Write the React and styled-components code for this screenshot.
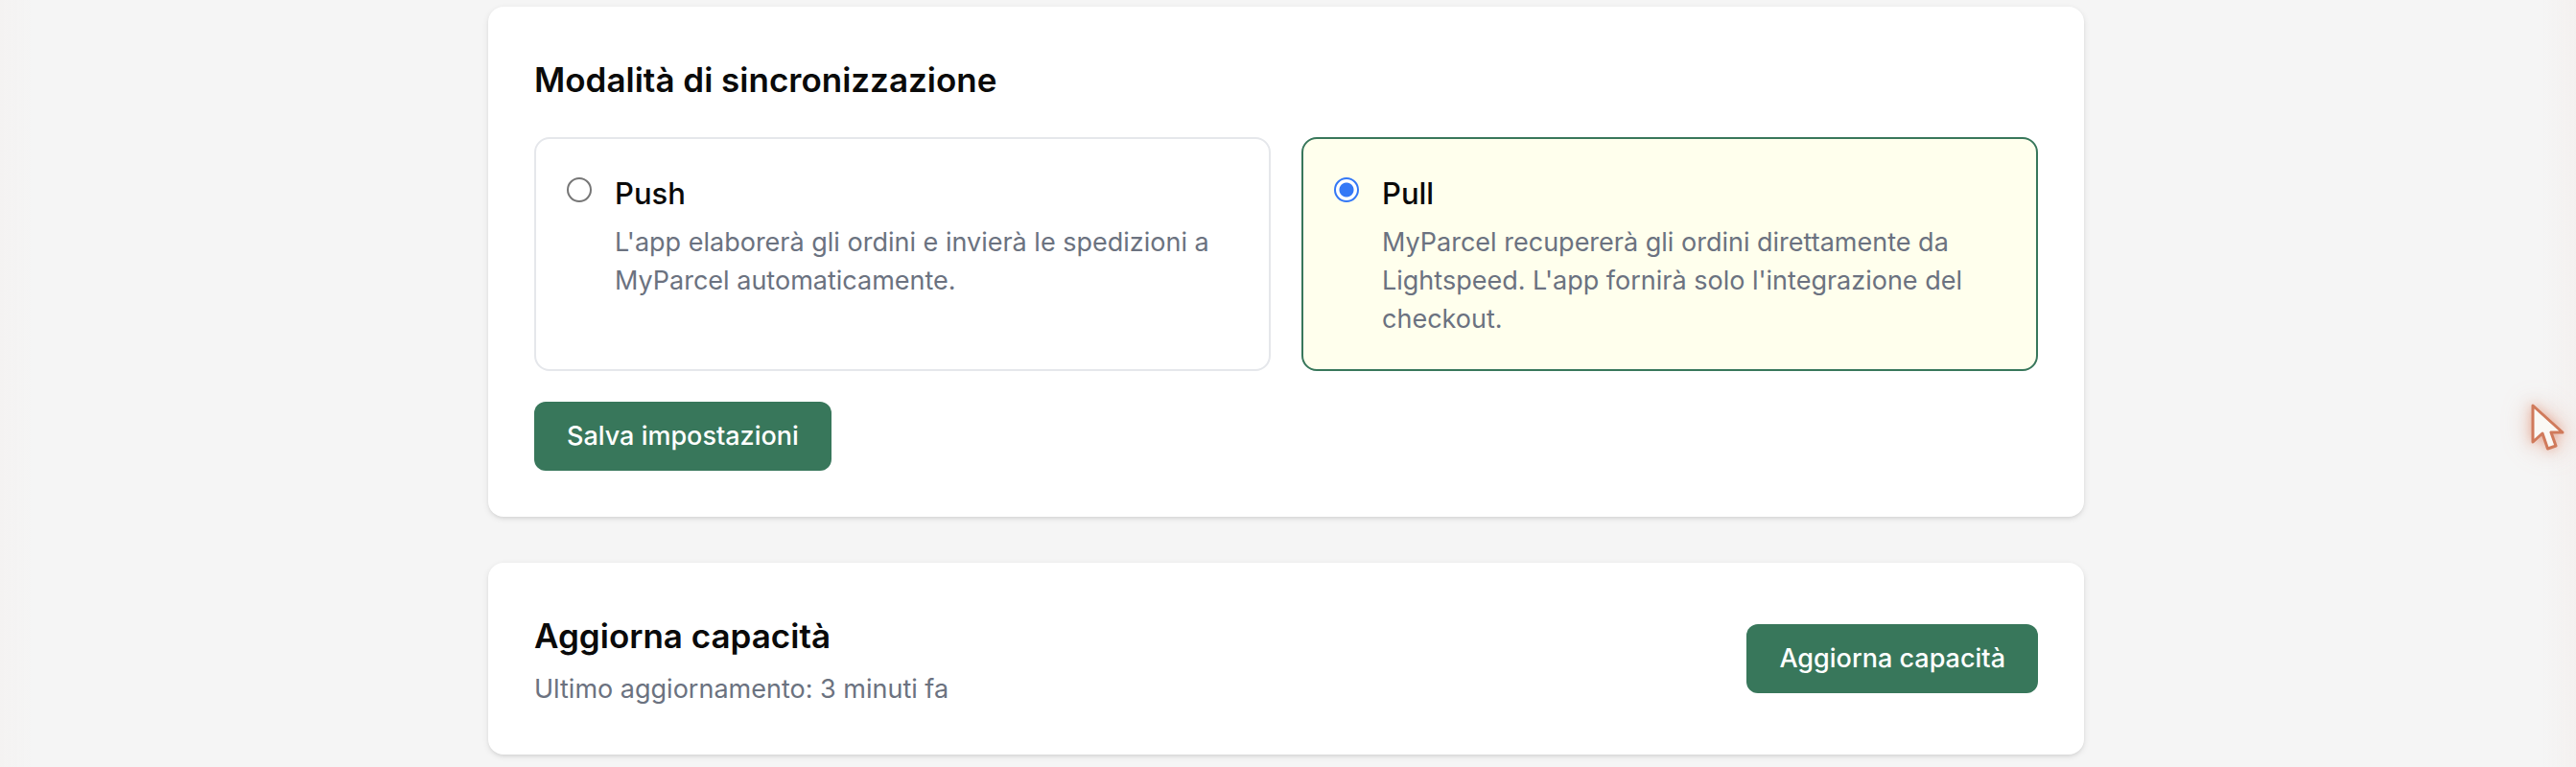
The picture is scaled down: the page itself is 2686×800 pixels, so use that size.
import React, { useState } from "react";
import styled, { createGlobalStyle } from "styled-components";

const GlobalStyle = createGlobalStyle`
  *, *::before, *::after { box-sizing: border-box; }
  body {
    margin: 0;
    background: #f5f5f5;
    color: #0a0a0a;
    font-family: Inter, "Liberation Sans", sans-serif;
  }
  h2, p { margin: 0; }
`;

const Page = styled.main`
  display: flex;
  flex-direction: column;
  align-items: center;
  gap: 48px;
  min-height: 100vh;
  padding: 7px 4px 13px 0;
`;

const Card = styled.section`
  width: 100%;
  max-width: 1664px;
  padding: 48px;
  border-radius: 16px;
  background: #fff;
  box-shadow: 0 2px 6px rgba(0, 0, 0, 0.1), 0 2px 4px -2px rgba(0, 0, 0, 0.1);
`;

const SplitCard = styled(Card)`
  display: flex;
  align-items: center;
  justify-content: space-between;
  gap: 32px;
`;

const Heading = styled.h2`
  font-size: 35px;
  line-height: 56px;
  font-weight: 600;
`;

const Options = styled.div`
  display: grid;
  grid-template-columns: repeat(2, minmax(0, 1fr));
  gap: 32px;
  margin: 32px 0;
`;

const Option = styled.label`
  display: flex;
  align-items: flex-start;
  gap: 24px;
  padding: 32px;
  border: 2px solid ${(p) => (p.$selected ? "#38775b" : "#e5e7eb")};
  border-radius: 16px;
  background: ${(p) => (p.$selected ? "#ffffed" : "#fff")};
  cursor: pointer;
`;

const Radio = styled.input`
  appearance: none;
  flex: none;
  width: 26px;
  height: 26px;
  margin: 8px 0 0;
  border: 2px solid #767676;
  border-radius: 50%;
  background: #fff;

  &:checked {
    border-color: #3478f6;
    background: radial-gradient(circle, #3478f6 7px, #fff 8px);
  }
`;

const OptionText = styled.span`
  display: flex;
  flex-direction: column;
  gap: 6px;
`;

const OptionTitle = styled.span`
  font-size: 31px;
  line-height: 50px;
  font-weight: 500;
`;

const Muted = styled.span`
  display: block;
  font-size: 27px;
  line-height: 40px;
  color: #6b7280;
`;

const Note = styled(Muted)`
  margin-top: 8px;
`;

const Button = styled.button`
  display: block;
  padding: 16px 34px;
  border: 0;
  border-radius: 12px;
  background: #38775b;
  color: #fff;
  font: 500 27px/40px Inter, "Liberation Sans", sans-serif;
  cursor: pointer;
`;

const EdgeGlow = styled.div`
  position: fixed;
  inset: 0;
  pointer-events: none;
  background: linear-gradient(
    90deg,
    rgba(217, 140, 100, 0.02),
    rgba(217, 140, 100, 0) 36px,
    rgba(217, 140, 100, 0) calc(100% - 36px),
    rgba(217, 119, 87, 0.03)
  );
`;

const Pointer = styled.svg`
  position: fixed;
  top: 420px;
  right: 12px;
  width: 36px;
  height: 51px;
  overflow: visible;
  pointer-events: none;
  filter: drop-shadow(0 0 6px rgba(217, 119, 87, 0.5)) drop-shadow(0 0 14px rgba(217, 119, 87, 0.35));
`;

const modes = [
  {
    id: "push",
    title: "Push",
    text: "L'app elaborerà gli ordini e invierà le spedizioni a MyParcel automaticamente.",
  },
  {
    id: "pull",
    title: "Pull",
    text: "MyParcel recupererà gli ordini direttamente da Lightspeed. L'app fornirà solo l'integrazione del checkout.",
  },
];

export default function App() {
  const [mode, setMode] = useState("pull");
  return (
    <>
      <GlobalStyle />
      <Page>
        <Card>
          <Heading>Modalità di sincronizzazione</Heading>
          <Options>
            {modes.map((m) => (
              <Option key={m.id} htmlFor={m.id} $selected={mode === m.id}>
                <Radio
                  type="radio"
                  id={m.id}
                  name="mode"
                  checked={mode === m.id}
                  onChange={() => setMode(m.id)}
                />
                <OptionText>
                  <OptionTitle>{m.title}</OptionTitle>
                  <Muted>{m.text}</Muted>
                </OptionText>
              </Option>
            ))}
          </Options>
          <Button type="button">Salva impostazioni</Button>
        </Card>
        <SplitCard>
          <div>
            <Heading>Aggiorna capacità</Heading>
            <Note as="p">Ultimo aggiornamento: 3 minuti fa</Note>
          </div>
          <Button type="button">Aggiorna capacità</Button>
        </SplitCard>
      </Page>
      <EdgeGlow />
      <Pointer viewBox="0 0 36 51" aria-hidden="true">
        <path
          d="M3 3 V41 L13 32 L18.500 48 L27 45 L22 31 H34 Z"
          fill="#faf9f5"
          stroke="#d07a5b"
          strokeWidth="3"
          strokeLinejoin="round"
        />
      </Pointer>
    </>
  );
}
